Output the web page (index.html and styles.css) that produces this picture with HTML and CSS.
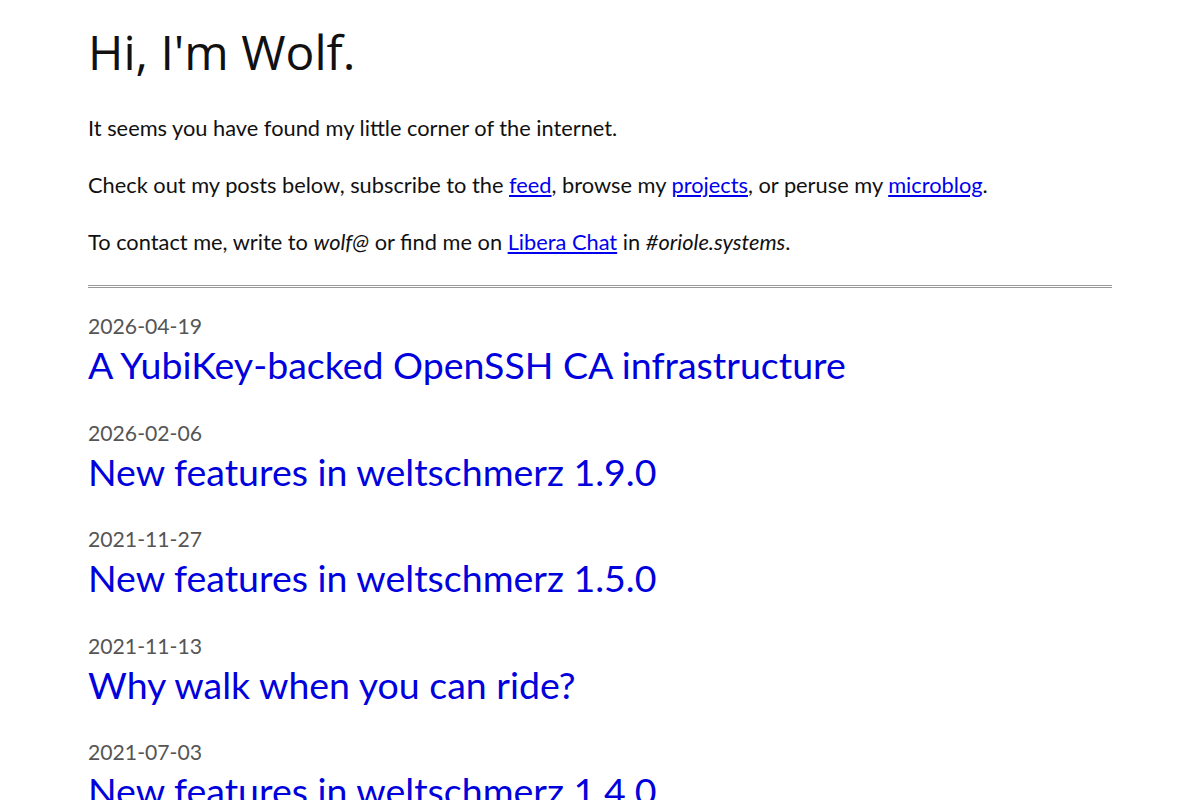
FILE: index.html
```html
<!DOCTYPE html>
<html lang="en">
<head>
  <meta charset="UTF-8">
  <meta name="viewport" content="width=device-width, initial-scale=1.0">
  <title>Wolf</title>
  <link rel="stylesheet" href="styles.css">
</head>
<body>
  <main class="page">
    <h1>Hi, I'm Wolf.</h1>

    <p>It seems you have found my little corner of the internet.</p>
    <p>Check out my posts below, subscribe to the <a href="#">feed</a>, browse my <a href="#">projects</a>, or peruse my <a href="#">microblog</a>.</p>
    <p>To contact me, write to <em>wolf@</em> or find me on <a href="#">Libera Chat</a> in <em>#oriole.systems</em>.</p>

    <hr>

    <ul class="posts">
      <li class="post">
        <time>2026-04-19</time>
        <a class="post-title" href="#">A YubiKey-backed OpenSSH CA infrastructure</a>
      </li>
      <li class="post">
        <time>2026-02-06</time>
        <a class="post-title" href="#">New features in weltschmerz 1.9.0</a>
      </li>
      <li class="post">
        <time>2021-11-27</time>
        <a class="post-title" href="#">New features in weltschmerz 1.5.0</a>
      </li>
      <li class="post">
        <time>2021-11-13</time>
        <a class="post-title" href="#">Why walk when you can ride?</a>
      </li>
      <li class="post">
        <time>2021-07-03</time>
        <a class="post-title" href="#">New features in weltschmerz 1.4.0</a>
      </li>
    </ul>
  </main>
</body>
</html>
```

FILE: styles.css
```css
body {
  margin: 0;
  font-family: Lato, 'Noto Sans', sans-serif;
  font-size: 21.8px;
  line-height: 28px;
  color: #111;
  background: #fff;
}
.page {
  max-width: 1024px;
  margin: 0 auto;
  padding-top: 20px;
}
h1 {
  font-family: 'Open Sans', sans-serif;
  font-weight: normal;
  font-size: 48px;
  line-height: 64px;
  margin: 0 0 30px;
}
p {
  margin: 0 0 29px;
}
a {
  color: #0000ee;
}
hr {
  margin: 0 0 24px;
  border: none;
  border-top: 1px solid #999;
  border-bottom: 1px solid #999;
  height: 1px;
}
.posts {
  list-style: none;
  margin: 0;
  padding: 0;
}
.post {
  margin-bottom: 28.6px;
}
.post time {
  display: block;
  color: #555;
  font-size: 21.2px;
  line-height: 28px;
}
.post-title {
  display: block;
  font-size: 37.5px;
  line-height: 50px;
  text-decoration: none;
  color: #0000dd;
}
```
